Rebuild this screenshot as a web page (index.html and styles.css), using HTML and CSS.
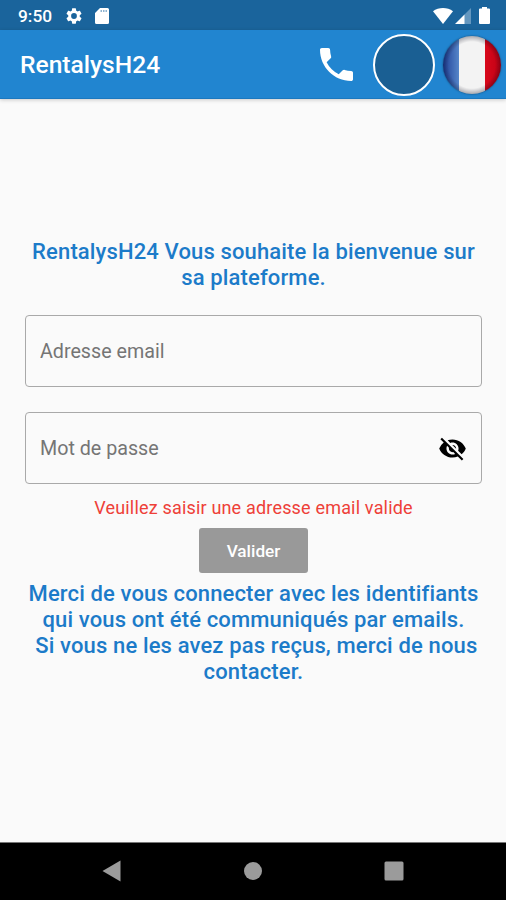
FILE: index.html
```html
<!DOCTYPE html>
<html lang="fr">
<head>
    <meta charset="UTF-8">
    <title>RentalysH24</title>
    <link rel="stylesheet" href="styles.css">
</head>
<body>

<div class="status">
    <span class="time">9:50</span>
    <svg class="gear" viewBox="2 2 20 20"><path d="M19.14 12.94c.04-.3.06-.61.06-.94 0-.32-.02-.64-.07-.94l2.03-1.58a.49.49 0 0 0 .12-.61l-1.92-3.32a.49.49 0 0 0-.59-.22l-2.39.96c-.5-.38-1.03-.7-1.62-.94l-.36-2.54a.48.48 0 0 0-.48-.41h-3.84c-.24 0-.43.17-.47.41l-.36 2.54c-.59.24-1.13.57-1.62.94l-2.39-.96a.48.48 0 0 0-.59.22L2.74 8.87a.48.48 0 0 0 .12.61l2.03 1.58c-.05.3-.09.63-.09.94s.02.64.07.94l-2.03 1.58a.49.49 0 0 0-.12.61l1.92 3.32c.12.22.37.29.59.22l2.39-.96c.5.38 1.03.7 1.62.94l.36 2.54c.05.24.24.41.48.41h3.84c.24 0 .44-.17.47-.41l.36-2.54c.59-.24 1.13-.56 1.62-.94l2.39.96c.22.08.47 0 .59-.22l1.92-3.32a.48.48 0 0 0-.12-.61zM12 15.6A3.6 3.6 0 1 1 12 8.400a3.600 3.600 0 0 1 0 7.200z"/></svg>
    <svg class="sd" viewBox="0 0 14 16"><path d="M5 0h7.500A1.500 1.500 0 0 1 14 1.500v13a1.500 1.500 0 0 1-1.500 1.500h-11A1.500 1.500 0 0 1 0 14.500V5z"/><path class="pins" d="M5.500 2h1.500v2H5.500zM8 2h1.500v2H8zM10.500 2H12v2h-1.500z"/></svg>
    <svg class="wifi" viewBox="0 0 20 16"><path d="M10 16L0 3.300C5.500-1.100 14.500-1.100 20 3.300z"/></svg>
    <svg class="signal" viewBox="0 0 16 16"><path class="weak" d="M16 0v16H9V7z"/><path d="M0 16l9.500-9.500V16z"/></svg>
    <svg class="battery" viewBox="0 0 11 17"><path d="M3 0h5v1.500h2a1 1 0 0 1 1 1V16a1 1 0 0 1-1 1H1a1 1 0 0 1-1-1V2.500a1 1 0 0 1 1-1h2z"/></svg>
</div>

<div class="bar">
    <h1>RentalysH24</h1>
    <svg class="phone" viewBox="3 3 18 18"><path d="M6.620 10.790c1.440 2.830 3.760 5.140 6.590 6.590l2.200-2.200c.27-.27.67-.36 1.020-.24 1.120.37 2.330.57 3.570.57.55 0 1 .45 1 1V20c0 .55-.45 1-1 1-9.390 0-17-7.610-17-17 0-.55.45-1 1-1h3.500c.55 0 1 .45 1 1 0 1.250.2 2.450.57 3.570.11.35.03.74-.25 1.020l-2.200 2.200z"/></svg>
    <span class="avatar"></span>
    <span class="flag"></span>
</div>

<div class="content">
    <p class="text">RentalysH24 Vous souhaite la bienvenue sur<br>sa plateforme.</p>
    <div class="field">
        <input type="text" placeholder="Adresse email">
    </div>
    <div class="field">
        <input type="password" placeholder="Mot de passe">
        <svg class="eye" viewBox="0 0 24 24"><path d="M12 7c2.760 0 5 2.240 5 5 0 .65-.13 1.260-.36 1.830l2.920 2.920c1.510-1.260 2.700-2.890 3.430-4.750-1.730-4.390-6-7.500-11-7.500-1.400 0-2.740.25-3.980.7l2.160 2.160C10.740 7.130 11.350 7 12 7zM2 4.270l2.280 2.280.46.46A11.800 11.800 0 0 0 1 12c1.730 4.390 6 7.500 11 7.500 1.550 0 3.030-.3 4.380-.84l.42.42L19.730 22 21 20.730 3.270 3 2 4.270zM7.530 9.800l1.550 1.550c-.05.21-.08.43-.08.65 0 1.660 1.340 3 3 3 .22 0 .44-.03.65-.08l1.550 1.550c-.67.33-1.410.53-2.200.53-2.760 0-5-2.240-5-5 0-.79.2-1.530.53-2.200zm4.310-.78l3.150 3.150.02-.16c0-1.660-1.340-3-3-3l-.17.01z"/></svg>
    </div>
    <p class="error">Veuillez saisir une adresse email valide</p>
    <button class="btn">Valider</button>
    <p class="text">Merci de vous connecter avec les identifiants<br>qui vous ont été communiqués par emails.<br>&nbsp;Si vous ne les avez pas reçus, merci de nous<br>contacter.</p>
</div>

<div class="nav">
    <svg viewBox="0 0 20 22"><path d="M18.500.5v21L.5 11z"/></svg>
    <svg viewBox="0 0 20 22"><circle cx="10" cy="11" r="9"/></svg>
    <svg viewBox="0 0 20 22"><rect x=".5" y="1.500" width="19" height="19" rx="1.500"/></svg>
</div>

</body>
</html>
```

FILE: styles.css
```css
*{
    margin: 0;
    padding: 0;
    box-sizing: border-box;
}
body{
    height: 900px;
    display: flex;
    flex-direction: column;
    background-color: #fafafa;
    font-family: Roboto, "Liberation Sans", sans-serif;
    overflow: hidden;
}
svg{
    display: block;
    flex: none;
    fill: #fff;
}
.status{
    height: 30px;
    flex: none;
    display: flex;
    align-items: center;
    padding: 1px 16px 0 18px;
    background-color: #1a649c;
    color: #fff;
}
.time{
    width: 48px;
    font-size: 17.3px;
    font-weight: 500;
}
.gear{
    width: 16px;
    height: 16px;
}
.sd{
    width: 14px;
    height: 16px;
    margin-left: 13px;
}
.sd .pins{
    fill: #8fb4d1;
}
.wifi{
    width: 20px;
    height: 16px;
    margin-left: auto;
}
.signal{
    width: 16px;
    height: 16px;
    margin-left: 2px;
}
.signal .weak{
    fill: #6497bf;
}
.battery{
    width: 11px;
    height: 17px;
    margin-left: 8px;
}
.bar{
    height: 69px;
    flex: none;
    display: flex;
    align-items: center;
    padding: 1px 5px 0 20px;
    background-color: #2185d0;
    border-bottom: 1px solid #1b78bf;
    box-shadow: 0 1px 4px rgba(0,0,0,.2);
    color: #fff;
}
.bar h1{
    flex: 1;
    font-size: 24.6px;
    font-weight: 500;
}
.phone{
    width: 33px;
    height: 33px;
    margin-right: 20px;
}
.avatar{
    width: 62px;
    height: 62px;
    margin-right: 8px;
    border: 2px solid #fff;
    border-radius: 50%;
    background-color: #1a5f93;
}
.flag{
    width: 58px;
    height: 58px;
    border-radius: 50%;
    background: radial-gradient(circle closest-side, rgba(0,0,0,0) 80%, rgba(0,0,20,.3) 100%),
        linear-gradient(90deg, #1f3f96 0, #5484c8 27%, #f3f3f3 27%, #f3f3f3 73%, #d8081b 73%, #c00014 100%);
    box-shadow: 0 0 2px rgba(0,0,0,.5);
}
.content{
    flex: 1;
    display: flex;
    flex-direction: column;
    align-items: center;
    padding: 140px 24px 0 25px;
}
.text{
    font-size: 22px;
    line-height: 26px;
    font-weight: 500;
    letter-spacing: .14px;
    text-align: center;
    white-space: nowrap;
    color: #1c7bc9;
}
.field{
    width: 100%;
    height: 72px;
    margin-top: 25px;
    display: flex;
    align-items: center;
    padding: 1px 14px 0;
    border: 1px solid #a9a9a9;
    border-radius: 4px;
}
.text + .field{
    margin-top: 24px;
}
.field input{
    flex: 1;
    min-width: 0;
    border: none;
    outline: none;
    background: none;
    font-family: inherit;
    font-size: 19.7px;
}
.field input::placeholder{
    color: #757575;
}
.eye{
    width: 29px;
    height: 29px;
    fill: #000;
}
.error{
    margin-top: 13px;
    font-size: 18px;
    line-height: 22px;
    letter-spacing: .18px;
    color: #ee4038;
}
.btn{
    width: 109px;
    height: 45px;
    margin: 9px 0 8px;
    border: none;
    border-radius: 3px;
    background-color: #999;
    font-family: inherit;
    font-size: 17.2px;
    font-weight: 500;
    color: #fff;
}
.nav{
    height: 58px;
    flex: none;
    display: flex;
    justify-content: space-between;
    align-items: center;
    padding: 0 102px 2px;
    background-color: #000;
    border-top: 1px solid #777;
}
.nav svg{
    width: 20px;
    height: 22px;
    fill: #9b9b9b;
}
```
